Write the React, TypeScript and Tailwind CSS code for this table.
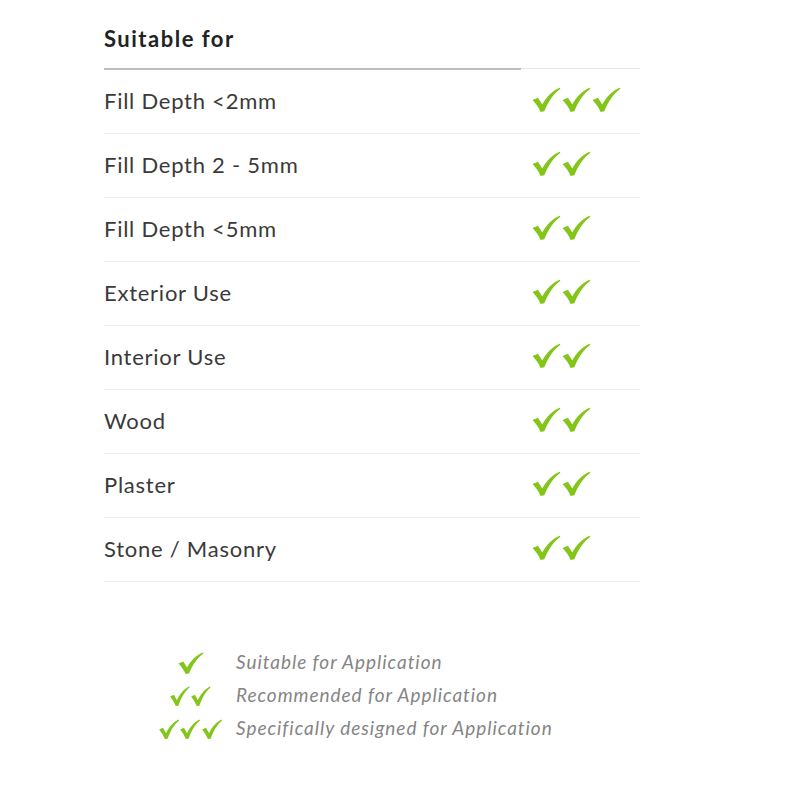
import React from "react";

function Check({ w = 30, h = 27 }: { w?: number; h?: number }) {
  return (
    <svg width={w} height={h} viewBox="0 0 28 24" preserveAspectRatio="none" className="shrink-0">
      <path
        d="M1.5 12.5 L6.5 10.5 L10.5 16.5 C14 10 19.5 4.5 26.5 1.5 L27.5 2.5 C21 7 16 14 12.5 22.5 L9 23 C7 19 4.5 15.5 1.5 12.5 Z"
        fill="#84c51a"
      />
    </svg>
  );
}

function Checks({ n, w, h }: { n: number; w?: number; h?: number }) {
  return (
    <div className="flex">
      {Array.from({ length: n }).map((_, i) => (
        <Check key={i} w={w} h={h} />
      ))}
    </div>
  );
}

const rows: [string, number][] = [
  ["Fill Depth <2mm", 3],
  ["Fill Depth 2 - 5mm", 2],
  ["Fill Depth <5mm", 2],
  ["Exterior Use", 2],
  ["Interior Use", 2],
  ["Wood", 2],
  ["Plaster", 2],
  ["Stone / Masonry", 2],
];

export default function App() {
  return (
    <div className="w-[800px] h-[800px] bg-white" style={{ fontFamily: "Lato, 'Liberation Sans', sans-serif" }}>
      <div className="pl-[104px] pt-[25px] w-[640px]">
        <div className="text-[22px] font-bold text-[#222] leading-[28px] pb-[15px] tracking-[1.5px]">Suitable for</div>
        <div className="flex h-[2px]">
          <div className="w-[417px] bg-[#bdbdbd]" />
          <div className="flex-1 flex flex-col justify-start">
            <div className="h-[1px] bg-[#e8e8e8]" />
          </div>
        </div>
        {rows.map(([label, n]) => (
          <div key={label} className="flex items-center h-[64px] border-b border-[#ececec] text-[22px] text-[#3a3a3a] tracking-[0.75px]">
            <div className="w-[427px] -mt-[3px]">{label}</div>
            <div className="-mt-[4px]">
              <Checks n={n} />
            </div>
          </div>
        ))}
      </div>
      <div className="mt-[67px] flex flex-col gap-[5px] text-[19px] italic text-[#858585] tracking-[0.95px]">
        {[
          [1, "Suitable for Application", 27, 24],
          [2, "Recommended for Application", 21, 22],
          [3, "Specifically designed for Application", 21.5, 22],
        ].map(([n, t, w, h]) => (
          <div key={t as string} className="flex items-center h-[28px]">
            <div className="w-[238px] flex justify-end pr-[14px]">
              <div className="w-[68px] flex justify-center">
                <Checks n={n as number} w={w as number} h={h as number} />
              </div>
            </div>
            <div className="-mt-[1px] -ml-[2px]">{t}</div>
          </div>
        ))}
      </div>
    </div>
  );
}
